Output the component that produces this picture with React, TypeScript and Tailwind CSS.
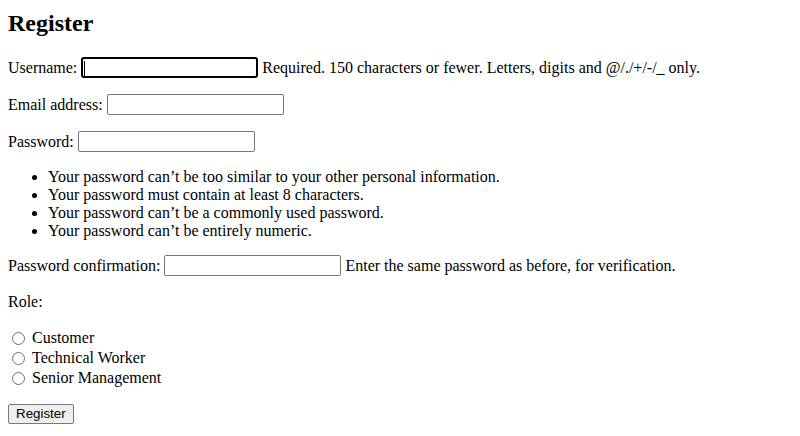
import React from "react";

function TextInput({ id, name }: { id: string; name: string }) {
  return (
    <input
      id={id}
      name={name}
      type="text"
      className="box-border h-[21px] w-[177px] shrink-0 rounded-[2px] border border-[#767676] bg-white px-[2px] outline-none"
    />
  );
}

function Radio({ label, value }: { label: string; value: string }) {
  return (
    <label className="flex h-[20px] items-center">
      <input
        type="radio"
        name="role"
        value={value}
        className="ml-[4px] box-border h-[13px] w-[13px] shrink-0 appearance-none rounded-full border border-[#6f6f6f] bg-white"
      />
      <span className="ml-[7px] leading-[18px]">{label}</span>
    </label>
  );
}

export default function App() {
  return (
    <div className="min-h-[436px] w-full bg-white px-[8px] pt-[9px] font-['Liberation_Serif','Times_New_Roman',serif] text-[16px] text-black">
      <h2 className="text-[24px] font-bold leading-[28px]">Register</h2>
      <form onSubmit={(e) => e.preventDefault()}>
        <div className="mt-[20px] flex h-[21px] items-center gap-[4px] whitespace-nowrap leading-[18px]">
          <label htmlFor="id_username">Username:</label>
          <div className="relative box-border h-[21px] w-[177px] shrink-0 rounded-[3px] border-2 border-black bg-white">
            <input
              id="id_username"
              name="username"
              type="text"
              className="h-full w-full bg-transparent outline-none"
            />
            <span className="absolute left-[1px] top-[2px] h-[15px] w-[1px] bg-black" />
          </div>
          <span>Required. 150 characters or fewer. Letters, digits and @/./+/-/_ only.</span>
        </div>

        <div className="mt-[16px] flex h-[21px] items-center gap-[4px] whitespace-nowrap leading-[18px]">
          <label htmlFor="id_email">Email address:</label>
          <TextInput id="id_email" name="email" />
        </div>

        <div className="mt-[16px] flex h-[21px] items-center gap-[4px] whitespace-nowrap leading-[18px]">
          <label htmlFor="id_password1">Password:</label>
          <TextInput id="id_password1" name="password1" />
        </div>

        <ul className="mt-[16px] list-disc pl-[40px] leading-[18px]">
          <li>Your password can’t be too similar to your other personal information.</li>
          <li>Your password must contain at least 8 characters.</li>
          <li>Your password can’t be a commonly used password.</li>
          <li>Your password can’t be entirely numeric.</li>
        </ul>

        <div className="mt-[15px] flex h-[21px] items-center gap-[4px] whitespace-nowrap leading-[18px]">
          <label htmlFor="id_password2">Password confirmation:</label>
          <TextInput id="id_password2" name="password2" />
          <span>Enter the same password as before, for verification.</span>
        </div>

        <p className="mt-[17px] leading-[18px]">Role:</p>

        <div className="mt-[17px] flex flex-col">
          <Radio label="Customer" value="customer" />
          <Radio label="Technical Worker" value="technical" />
          <Radio label="Senior Management" value="senior" />
        </div>

        <button
          type="submit"
          className="mt-[16px] box-border h-[20px] rounded-[2px] border border-[#767676] bg-[#efefef] px-[7px] font-['Liberation_Sans',Arial,sans-serif] text-[13.333px] leading-[16px] text-black"
        >
          Register
        </button>
      </form>
    </div>
  );
}
